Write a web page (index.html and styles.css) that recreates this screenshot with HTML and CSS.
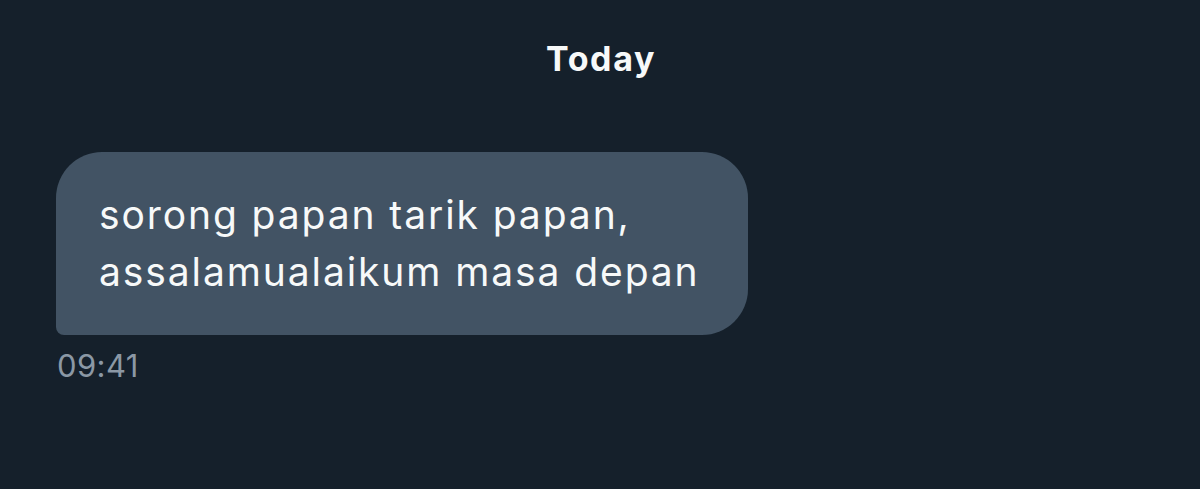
FILE: index.html
```html
<!DOCTYPE html>
<html>
<head>
<meta charset="utf-8">
<link rel="stylesheet" href="styles.css">
</head>
<body>
<div class="chat">
  <div class="day">Today</div>
  <div class="msg">
    <div class="bubble">sorong papan tarik papan,<br>assalamualaikum masa depan</div>
    <div class="time">09:41</div>
  </div>
</div>
</body>
</html>
```
FILE: styles.css
```css
html, body {
  margin: 0;
  padding: 0;
  background: #15202b;
  width: 1200px;
  height: 489px;
  overflow: hidden;
}
.chat {
  font-family: Inter, "Liberation Sans", sans-serif;
  display: flex;
  flex-direction: column;
  padding-top: 37px;
}
.day {
  text-align: center;
  color: #f7f9f9;
  font-weight: 700;
  font-size: 34px;
  line-height: 44px;
  letter-spacing: 1.6px;
  padding-left: 2px;
}
.msg {
  display: flex;
  flex-direction: column;
  align-items: flex-start;
  padding-left: 56px;
  margin-top: 71px;
}
.bubble {
  background: #425364;
  color: #f7f9f9;
  font-size: 39px;
  line-height: 57px;
  letter-spacing: 1.9px;
  padding: 34px 48px 35px 43px;
  border-radius: 46px 46px 46px 8px;
}
.time {
  color: #8b98a5;
  font-size: 31px;
  line-height: 36px;
  letter-spacing: 0.4px;
  margin-top: 13px;
  margin-left: 1px;
}
```
